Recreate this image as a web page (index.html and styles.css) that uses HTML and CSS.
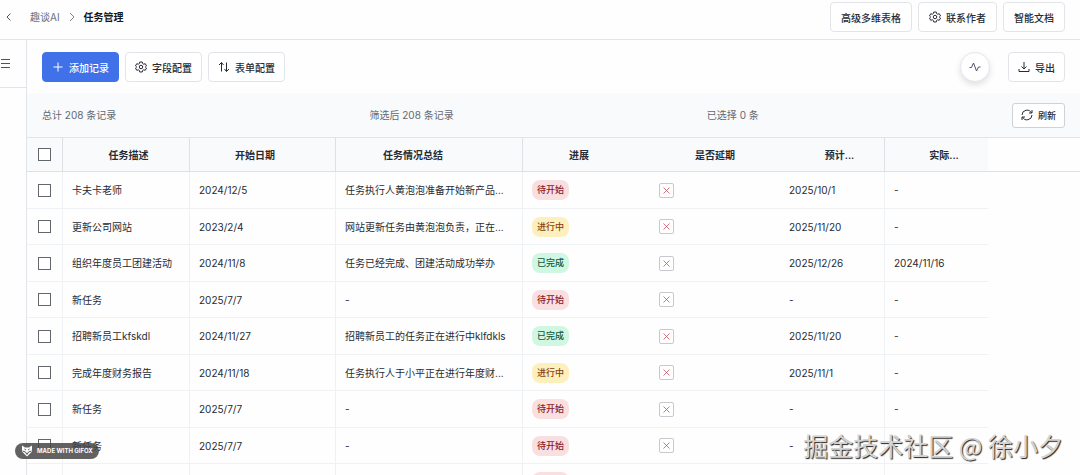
FILE: index.html
```html
<!DOCTYPE html>
<html lang="zh-CN">
<head>
  <meta charset="UTF-8">
  <meta name="viewport" content="width=device-width, initial-scale=1.0">
  <title>任务管理</title>
  <link rel="stylesheet" href="styles.css">
</head>
<body>
  <header class="topbar">
    <nav class="breadcrumb">
      <button class="icon-btn back" aria-label="返回">
        <svg viewBox="0 0 24 24" width="12" height="12"><path d="M15 5l-7 7 7 7"/></svg>
      </button>
      <a href="#">趣谈AI</a>
      <svg class="sep" viewBox="0 0 24 24" width="12" height="12"><path d="M8 4l8 8-8 8"/></svg>
      <span class="current">任务管理</span>
    </nav>
    <div class="actions">
      <button class="btn">高级多维表格</button>
      <button class="btn">
        <svg viewBox="0 0 24 24" width="12" height="12"><path d="M9.5 2h5l.8 3.2 2 1.2 3.2-1 2.5 4.4-2.4 2.2 2.4 2.2-2.5 4.4-3.2-1-2 1.2-.8 3.2h-5l-.8-3.2-2-1.2-3.2 1L1 14.2 3.4 12 1 9.8l2.5-4.4 3.2 1 2-1.2z"/><circle cx="12" cy="12" r="3.5"/></svg>
        联系作者
      </button>
      <button class="btn">智能文档</button>
    </div>
  </header>

  <div class="layout">
    <aside class="sidebar">
      <button class="icon-btn menu" aria-label="菜单">
        <svg viewBox="0 0 24 24" width="12" height="12"><path d="M2 5h18M2 13h18M2 21h18"/></svg>
      </button>
    </aside>

    <main class="content">
      <div class="toolbar">
        <button class="btn primary">
          <svg viewBox="0 0 24 24" width="12" height="12"><path d="M12 3v18M3 12h18"/></svg>
          添加记录
        </button>
        <button class="btn">
          <svg viewBox="0 0 24 24" width="12" height="12"><path d="M9.5 2h5l.8 3.2 2 1.2 3.2-1 2.5 4.4-2.4 2.2 2.4 2.2-2.5 4.4-3.2-1-2 1.2-.8 3.2h-5l-.8-3.2-2-1.2-3.2 1L1 14.2 3.4 12 1 9.8l2.5-4.4 3.2 1 2-1.2z"/><circle cx="12" cy="12" r="3.5"/></svg>
          字段配置
        </button>
        <button class="btn">
          <svg viewBox="0 0 24 24" width="12" height="12"><path d="M7 21V3M2 8l5-5 4 5M17 3v18M13 16l4 5 5-5"/></svg>
          表单配置
        </button>
        <button class="pulse" aria-label="动态">
          <svg viewBox="0 0 24 24" width="12" height="12"><path d="M1 13h4l4-9 6 16 4-8h4"/></svg>
        </button>
        <button class="btn">
          <svg viewBox="0 0 24 24" width="12" height="12"><path d="M12 2v14M7 11l5 5 5-5M2 16v5h20v-5"/></svg>
          导出
        </button>
      </div>

      <div class="stats">
        <span>总计 208 条记录</span>
        <span>筛选后 208 条记录</span>
        <span>已选择 0 条</span>
        <button class="btn small">
          <svg viewBox="0 0 24 24" width="12" height="12"><path d="M22 2v6h-6M2 22v-6h6M2 12A10 10 0 0 1 21 8M22 12a10 10 0 0 1-19 4"/></svg>
          刷新
        </button>
      </div>

      <table class="grid">
        <colgroup>
          <col class="w-check"><col class="w-desc"><col class="w-start"><col class="w-summary"><col class="w-status"><col class="w-delay"><col class="w-plan"><col class="w-actual"><col>
        </colgroup>
        <thead>
          <tr>
            <th class="line"><input type="checkbox" aria-label="全选"></th>
            <th class="line padded">任务描述</th>
            <th class="line sortable">开始日期</th>
            <th class="line wide">任务情况总结</th>
            <th class="sortable">进展</th>
            <th>是否延期</th>
            <th class="line cut">预计...</th>
            <th class="cut">实际...</th>
            <th class="filler"></th>
          </tr>
        </thead>
        <tbody id="rows"></tbody>
      </table>
    </main>
  </div>

  <div class="gifox">
    <svg viewBox="0 0 24 24" width="12" height="12"><path class="face" d="M2 1l6 4h8l6-4v12l-10 10L2 13z"/><path class="lines" d="M3 12l6 2 3 5 3-5 6-2M7 8l3 2M17 8l-3 2"/></svg>
    MADE WITH GIFOX
  </div>
  <div class="watermark">掘金技术社区 @ 徐小夕</div>

  <script>
    var states = { todo: '待开始', doing: '进行中', done: '已完成' };

    var tasks = [
      ['卡夫卡老师', '2024/12/5', '任务执行人黄泡泡准备开始新产品...', 'todo', '2025/10/1', '-'],
      ['更新公司网站', '2023/2/4', '网站更新任务由黄泡泡负责，正在...', 'doing', '2025/11/20', '-'],
      ['组织年度员工团建活动', '2024/11/8', '任务已经完成、团建活动成功举办', 'done', '2025/12/26', '2024/11/16'],
      ['新任务', '2025/7/7', '-', 'todo', '-', '-'],
      ['招聘新员工kfskdl', '2024/11/27', '招聘新员工的任务正在进行中klfdkls', 'done', '2025/11/20', '-'],
      ['完成年度财务报告', '2024/11/18', '任务执行人于小平正在进行年度财...', 'doing', '2025/11/1', '-'],
      ['新任务', '2025/7/7', '-', 'todo', '-', '-'],
      ['新任务', '2025/7/7', '-', 'todo', '-', '-'],
      ['', '', '', 'todo', '', '']
    ];

    var cross = '<span class="cross"><svg viewBox="0 0 24 24" width="9" height="9"><path d="M4 4l16 16M20 4L4 20"/></svg></span>';

    document.getElementById('rows').innerHTML = tasks.map(function(t) {
      return '<tr>' +
        '<td class="line check"><input type="checkbox" aria-label="选择 ' + t[0] + '"></td>' +
        '<td class="line">' + t[0] + '</td>' +
        '<td class="line">' + t[1] + '</td>' +
        '<td class="line">' + t[2] + '</td>' +
        '<td><span class="tag ' + t[3] + '">' + states[t[3]] + '</span></td>' +
        '<td>' + cross + '</td>' +
        '<td class="line">' + t[4] + '</td>' +
        '<td>' + t[5] + '</td>' +
        '<td class="filler"></td>' +
        '</tr>';
    }).join('');
  </script>
</body>
</html>
```
FILE: styles.css
```css
* {
  box-sizing: border-box;
}

body {
  margin: 0;
  height: 100vh;
  display: flex;
  flex-direction: column;
  overflow: hidden;
  background-color: #fefefe;
  color: #272b33;
  font-family: Inter, "Noto Sans CJK SC", sans-serif;
  font-size: 10px;
  line-height: 16px;
}

svg {
  fill: none;
  stroke: currentColor;
  stroke-width: 2;
  flex: none;
}

button {
  font-family: inherit;
  color: inherit;
  cursor: pointer;
}

.topbar {
  display: flex;
  justify-content: space-between;
  padding: 2px 15px 7px 0;
  border-bottom: 1px solid #e1e4e8;
}

.breadcrumb {
  display: flex;
  align-items: center;
  gap: 6px;
}

.breadcrumb a {
  color: #6b7280;
  text-decoration: none;
}

.breadcrumb .sep {
  color: #7d838c;
}

.breadcrumb .current {
  color: #15181e;
  font-weight: 600;
}

.icon-btn {
  display: flex;
  padding: 0;
  border: none;
  background: none;
  color: #4b5563;
}

.back {
  padding: 0 9px 0 3px;
}

.actions {
  display: flex;
  gap: 6px;
}

.btn {
  display: flex;
  align-items: center;
  justify-content: center;
  gap: 5px;
  height: 30px;
  padding: 0 9px;
  border: 1px solid #e1e4e8;
  border-radius: 4px;
  background-color: #fff;
  font-size: 10px;
  font-weight: 500;
  white-space: nowrap;
}

.actions .btn {
  padding: 0 10px;
}

.btn.primary {
  border-color: #4071e8;
  background-color: #4071e8;
  color: #fff;
}

.btn.small {
  height: 25px;
  padding: 0 8px;
  border-color: #cfd3d8;
  border-radius: 3px;
  font-size: 9px;
}

.layout {
  flex: 1;
  display: flex;
  min-height: 0;
}

.sidebar {
  width: 27px;
  flex: none;
  border-right: 1px solid #e1e4e8;
}

.menu {
  width: 100%;
  padding: 17px 0 18px;
  border-bottom: 1px solid #e1e4e8;
}

.content {
  flex: 1;
  min-width: 0;
  overflow: hidden;
}

.toolbar {
  display: flex;
  gap: 6px;
  padding: 12px 15px 11px;
}

.pulse {
  display: flex;
  align-items: center;
  justify-content: center;
  width: 30px;
  height: 30px;
  margin-left: auto;
  margin-right: 12px;
  padding: 0;
  border: 1px solid #e5e7eb;
  border-radius: 50%;
  background-color: #fff;
  color: #4b5563;
  box-shadow: 0 3px 6px rgba(0, 0, 0, 0.12);
}

.stats {
  display: flex;
  align-items: center;
  justify-content: space-between;
  height: 45px;
  padding: 0 15px;
  border-bottom: 1px solid #e1e4e8;
  background-color: #f8fafb;
  color: #636974;
}

.stats .btn {
  color: #272b33;
}

.grid {
  width: 100%;
  table-layout: fixed;
  border-collapse: separate;
  border-spacing: 0;
}

.w-check { width: 36px; }
.w-desc { width: 127px; }
.w-start { width: 146px; }
.w-summary { width: 187px; }
.w-status { width: 127px; }
.w-delay { width: 130px; }
.w-plan { width: 105px; }
.w-actual { width: 103px; }

th,
td {
  padding: 0 0 0 9px;
  white-space: nowrap;
}

th {
  height: 34px;
  padding: 0;
  border-bottom: 1px solid #dde1e5;
  background-color: #f8fafb;
  font-weight: 600;
}

th.line {
  border-right: 1px solid #dde1e5;
}

th.padded {
  padding-left: 5px;
}

th.sortable {
  padding-right: 15px;
}

th.wide {
  padding-right: 32px;
}

th.cut {
  padding-left: 15px;
}

/* rows average out at 36.5px */
td {
  height: 37px;
  border-bottom: 1px solid #eff2f4;
}

tr:nth-child(even) td {
  height: 36px;
}

td.line {
  border-right: 1px solid #eff2f4;
}

td.check {
  padding: 0;
  text-align: center;
}

th.filler {
  background: none;
}

td.filler {
  border: none;
}

input[type="checkbox"] {
  appearance: none;
  display: block;
  width: 13px;
  height: 13px;
  margin: 0 auto;
  border: 1px solid #63676d;
  background-color: #fff;
}

.tag {
  display: inline-block;
  padding: 2px 5px;
  border-radius: 8px;
  font-size: 9px;
  font-weight: 500;
  vertical-align: middle;
}

.todo {
  background-color: #fadfe0;
  color: #8a2020;
}

.doing {
  background-color: #fdf0bd;
  color: #85400f;
}

.done {
  background-color: #cff7e2;
  color: #14583d;
}

.cross {
  display: flex;
  align-items: center;
  justify-content: center;
  width: 15px;
  height: 15px;
  border: 1px solid #c6c9cd;
  border-radius: 2px;
  background-color: #fff;
  color: #c64a57;
}

.gifox {
  position: absolute;
  left: 15px;
  bottom: 16px;
  display: flex;
  align-items: center;
  gap: 4px;
  height: 16px;
  padding: 0 6px;
  border-radius: 8px;
  background-color: rgba(70, 70, 70, 0.85);
  color: #fff;
  font-size: 6px;
  font-weight: 700;
  white-space: nowrap;
}

.gifox .face {
  fill: #fff;
  stroke: none;
}

.gifox .lines {
  stroke: #555;
}

.watermark {
  position: absolute;
  right: 17px;
  bottom: 12px;
  color: #d4d4d4;
  font-family: "Noto Sans CJK SC", sans-serif;
  font-size: 25px;
  line-height: 36px;
  text-shadow: 1px 1px 1px #222;
  white-space: nowrap;
}
```
